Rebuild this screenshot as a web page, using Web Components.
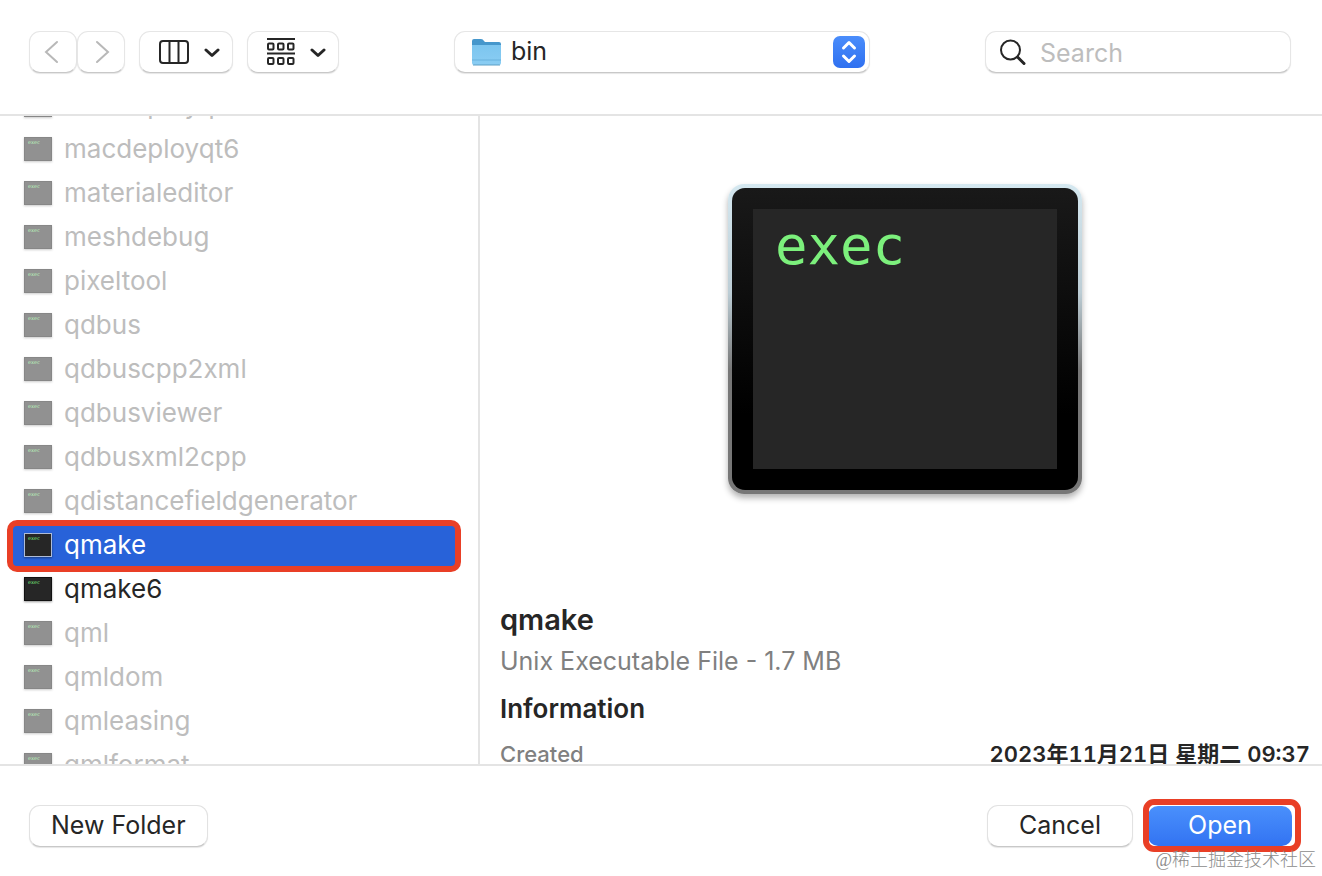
<!DOCTYPE html>
<html lang="en">
<head>
<meta charset="utf-8">
<meta name="viewport" content="width=device-width, initial-scale=1">
<title>Open</title>
<style>
    body {
        margin: 0;
        background: #fff;
        color: #262626;
        font-family: Inter, "Noto Sans CJK SC", sans-serif;
        font-size: 25px;
        line-height: 32px;
    }
</style>
</head>
<body>
<file-dialog>
    <dialog-toolbar slot="toolbar"></dialog-toolbar>
    <file-list slot="files"></file-list>
    <file-preview slot="preview">
        <span slot="name">qmake</span>
        <span slot="kind">Unix Executable File - 1.7 MB</span>
        <span slot="created">2023年11月21日 星期二 09:37</span>
    </file-preview>
    <push-button slot="left">New Folder</push-button>
    <push-button slot="right">Cancel</push-button>
    <push-button slot="right" primary marked>Open</push-button>
    <span slot="credit">@稀土掘金技术社区</span>
</file-dialog>

<script>
class FileDialog extends HTMLElement {

    constructor() {
        super();
        this.attachShadow({mode: "open"}).innerHTML = `
        <style>
            :host {
                display: grid;
                grid-template-rows: auto minmax(0, 1fr) auto;
                height: 100vh;
                position: relative;
            }

            header {
                border-bottom: 2px solid #e4e4e4;
                padding: 31px 31px 41px 29px;
            }

            main {
                display: grid;
                grid-template-columns: 480px minmax(0, 1fr);
                min-height: 0;
                overflow: hidden;
            }

            footer {
                display: flex;
                justify-content: space-between;
                border-top: 2px solid #e4e4e4;
                padding: 39px 29px 29px;
            }

            .actions {
                display: flex;
                gap: 14px;
            }

            .credit {
                position: absolute;
                right: 6px;
                bottom: 4px;
                font: 300 18px/24px "Liberation Serif", "Noto Sans CJK SC", serif;
                color: #8c8c8c;
                pointer-events: none;
            }
        </style>
        <header><slot name="toolbar"></slot></header>
        <main>
            <slot name="files"></slot>
            <slot name="preview"></slot>
        </main>
        <footer>
            <slot name="left"></slot>
            <div class="actions"><slot name="right"></slot></div>
        </footer>
        <div class="credit"><slot name="credit"></slot></div>`;
    }
}

class DialogToolbar extends HTMLElement {

    constructor() {
        super();
        this.attachShadow({mode: "open"}).innerHTML = `
        <style>
            * {
                box-sizing: border-box;
            }

            :host {
                display: flex;
                justify-content: space-between;
                align-items: center;
            }

            .tools, .pair {
                display: flex;
            }

            .tools {
                gap: 14px;
            }

            .box {
                display: flex;
                align-items: center;
                height: 42px;
                margin: 0;
                padding: 0;
                border: 1px solid #e6e6e6;
                border-bottom-color: #c8c8c8;
                border-radius: 11px;
                background: #fff;
                box-shadow: 0 1px 1px rgba(0, 0, 0, 0.1);
                font: inherit;
                color: inherit;
            }

            button.box {
                justify-content: center;
                width: 48px;
            }

            button.menu {
                width: 94px;
                gap: 14px;
                padding-left: 5px;
            }

            button.group {
                width: 92px;
            }

            svg {
                display: block;
                flex: none;
            }

            .path {
                width: 416px;
                padding: 0 4px 0 16px;
                gap: 8px;
            }

            select {
                flex: 1;
                min-width: 0;
                height: 40px;
                appearance: none;
                border: 0;
                padding: 0 0 2px;
                background: none;
                font: inherit;
                color: inherit;
            }

            .search {
                width: 306px;
                padding: 0 14px;
                gap: 14px;
            }

            input {
                flex: 1;
                min-width: 0;
                border: 0;
                padding: 2px 0 0;
                outline: 0;
                background: none;
                font: inherit;
                color: inherit;
            }

            input::placeholder {
                color: #bdbdbd;
            }
        </style>
        <div class="tools">
            <div class="pair">
                <button class="box" aria-label="Back">
                    <svg width="18" height="24" fill="none" stroke="#b8b8b8" stroke-width="2" stroke-linecap="round"><path d="M13 2L2 12L13 22"/></svg>
                </button>
                <button class="box" aria-label="Forward">
                    <svg width="18" height="24" fill="none" stroke="#b8b8b8" stroke-width="2" stroke-linecap="round"><path d="M5 2L16 12L5 22"/></svg>
                </button>
            </div>
            <button class="box menu" aria-label="Column view">
                <svg width="32" height="26" fill="none" stroke="#262626" stroke-width="2">
                    <rect x="2" y="2" width="28" height="22" rx="3"/>
                    <path d="M11.500 2V24M20.500 2V24"/>
                </svg>
                <svg width="16" height="12" fill="none" stroke="#262626" stroke-width="3" stroke-linecap="round" stroke-linejoin="round"><path d="M2 4L8 9.500L14 4"/></svg>
            </button>
            <button class="box menu group" aria-label="Group items">
                <svg width="30" height="30" fill="none" stroke="#262626" stroke-width="2">
                    <path d="M1 2H29M1 16.500H29"/>
                    <rect x="2" y="6.500" width="5.500" height="6" rx="1"/>
                    <rect x="12" y="6.500" width="5.500" height="6" rx="1"/>
                    <rect x="22" y="6.500" width="5.500" height="6" rx="1"/>
                    <rect x="2" y="21" width="5.500" height="6" rx="1"/>
                    <rect x="12" y="21" width="5.500" height="6" rx="1"/>
                    <rect x="22" y="21" width="5.500" height="6" rx="1"/>
                </svg>
                <svg width="16" height="12" fill="none" stroke="#262626" stroke-width="3" stroke-linecap="round" stroke-linejoin="round"><path d="M2 4L8 9.500L14 4"/></svg>
            </button>
        </div>
        <div class="box path">
            <svg width="32" height="30">
                <defs><linearGradient id="f" x2="0" y2="1"><stop stop-color="#7cc5ef"/><stop offset="1" stop-color="#8acdf3"/></linearGradient></defs>
                <path d="M1 26V4Q1 2 3 2H10Q12 2 13 4L14 5H28Q30 5 30 7V26Z" fill="#4697cc"/>
                <path d="M1 8H30V26Q30 28 28 28H3Q1 28 1 26Z" fill="url(#f)"/>
                <path d="M1 23H30" stroke="#68b1dd"/>
                <path d="M2 28H29" stroke="#5d9fc5"/>
            </svg>
            <select aria-label="Folder"><option>bin</option></select>
            <svg width="32" height="32">
                <defs><linearGradient id="b" x2="0" y2="1"><stop stop-color="#4a8dfb"/><stop offset="1" stop-color="#2f70f0"/></linearGradient></defs>
                <rect width="32" height="32" rx="7" fill="url(#b)"/>
                <path d="M10.500 12L16 6.500L21.500 12M10.500 20L16 25.500L21.500 20" fill="none" stroke="#fff" stroke-width="3" stroke-linecap="round" stroke-linejoin="round"/>
            </svg>
        </div>
        <label class="box search">
            <svg width="26" height="28" fill="none" stroke="#262626" stroke-linecap="round">
                <circle cx="10.500" cy="12" r="9.500" stroke-width="2"/>
                <path d="M17.500 19L24 25.500" stroke-width="3"/>
            </svg>
            <input type="text" placeholder="Search" aria-label="Search">
        </label>`;
    }
}

// the same terminal picture serves the rows and the preview
class ExecIcon extends HTMLElement {

    connectedCallback() {
        const root = this.attachShadow({mode: "open"});
        if (this.hasAttribute("large")) {
            root.innerHTML = `
            <style>
                :host {
                    display: block;
                    box-sizing: border-box;
                    width: 354px;
                    height: 310px;
                    padding: 4px;
                    border-radius: 16px;
                    background: linear-gradient(#d5e8f0, #bccdd5 35%, #777 60%, #777);
                    box-shadow: 0 4px 6px rgba(0, 0, 0, 0.3);
                }

                .frame {
                    box-sizing: border-box;
                    height: 302px;
                    padding: 21px;
                    border-radius: 13px;
                    background: linear-gradient(#191919, #000 75%);
                }

                .screen {
                    box-sizing: border-box;
                    height: 260px;
                    padding: 5px 22px;
                    background: #262626;
                    color: #7cf07c;
                    font: 54px/64px "DejaVu Sans Mono", monospace;
                }
            </style>
            <div class="frame"><div class="screen">exec</div></div>`;
            return;
        }
        root.innerHTML = `
        <style>
            :host {
                display: block;
                box-sizing: border-box;
                flex: none;
                width: 28px;
                height: 24px;
                padding: 1px 3px;
                border: 1px solid #111;
                background: #262626;
                box-shadow: 0 1px 2px rgba(0, 0, 0, 0.4);
                color: #7cf07c;
                font: 5px/6px "DejaVu Sans Mono", monospace;
            }

            :host([dim]) {
                opacity: 0.5;
            }

            :host([lit]) {
                border-color: #aebcd8;
            }
        </style>exec`;
    }
}

class FileRow extends HTMLElement {

    constructor() {
        super();
        this.attachShadow({mode: "open"});
    }

    set file(file) {
        this._file = file;
        this.render();
    }

    render() {
        const {name, enabled, selected} = this._file;
        this.shadowRoot.innerHTML = `
        <style>
            :host {
                display: block;
                position: relative;
            }

            button {
                display: flex;
                align-items: center;
                gap: 12px;
                width: 100%;
                height: 44px;
                padding: 0 14px;
                border: 0;
                background: none;
                font: inherit;
                color: #262626;
                text-align: left;
            }

            button:disabled {
                color: #bdbdbd;
            }

            .mark {
                position: absolute;
                inset: -3px -3px -5px;
                border: 6px solid #e93f26;
                border-radius: 10px;
                background: #2862d9;
            }

            .mark + button {
                position: relative;
                color: #fff;
            }
        </style>
        ${selected ? `<div class="mark"></div>` : ""}
        <button ${enabled ? "" : "disabled"}>
            <exec-icon ${enabled ? "" : "dim"} ${selected ? "lit" : ""}></exec-icon>
            <span>${name}</span>
        </button>`;
    }
}

const files = [
    "macdeployqt", "macdeployqt6", "materialeditor", "meshdebug", "pixeltool",
    "qdbus", "qdbuscpp2xml", "qdbusviewer", "qdbusxml2cpp", "qdistancefieldgenerator",
    "qmake", "qmake6", "qml", "qmldom", "qmleasing", "qmlformat"
];

class FileList extends HTMLElement {

    constructor() {
        super();
        this.attachShadow({mode: "open"}).innerHTML = `
        <style>
            :host {
                display: block;
                box-sizing: border-box;
                min-height: 0;
                overflow-y: auto;
                scrollbar-width: none;
                padding: 0 20px 0 10px;
                border-right: 2px solid #e4e4e4;
                font-size: 26px;
            }
        </style>`;
    }

    connectedCallback() {
        files.forEach(name => {
            const row = document.createElement("file-row");
            row.file = {
                name,
                enabled: name.startsWith("qmake"),
                selected: name === "qmake"
            };
            this.shadowRoot.appendChild(row);
        });
    }
}

class FilePreview extends HTMLElement {

    constructor() {
        super();
        this.attachShadow({mode: "open"}).innerHTML = `
        <style>
            :host {
                display: block;
                min-height: 0;
                overflow: hidden;
                padding: 68px 12px 0 20px;
            }

            exec-icon {
                margin: 0 auto 106px;
            }

            h1, h2, p, dl, dd {
                margin: 0;
            }

            h1 {
                font-size: 29px;
                line-height: 40px;
                font-weight: 600;
            }

            p {
                line-height: 42px;
                color: #808080;
            }

            h2 {
                font-size: 26px;
                line-height: 54px;
                font-weight: 600;
            }

            dl {
                display: flex;
                justify-content: space-between;
                font-size: 22px;
                line-height: 36px;
                font-weight: 500;
            }

            dt {
                color: #808080;
            }

            dd {
                font-variant-numeric: tabular-nums;
                font-weight: 600;
            }
        </style>
        <exec-icon large></exec-icon>
        <h1><slot name="name"></slot></h1>
        <p><slot name="kind"></slot></p>
        <h2>Information</h2>
        <dl>
            <dt>Created</dt>
            <dd><slot name="created"></slot></dd>
        </dl>`;
    }
}

class PushButton extends HTMLElement {

    constructor() {
        super();
        this.attachShadow({mode: "open"}).innerHTML = `
        <style>
            :host {
                display: block;
                position: relative;
            }

            button {
                box-sizing: border-box;
                min-width: 146px;
                height: 42px;
                padding: 0 21px 2px;
                border: 1px solid #e2e2e2;
                border-bottom-color: #c8c8c8;
                border-radius: 11px;
                background: #fff;
                box-shadow: 0 1px 1px rgba(0, 0, 0, 0.1);
                font: inherit;
                color: inherit;
            }

            :host([primary]) button {
                border-color: transparent;
                background: linear-gradient(#4a90fc, #3273f2) padding-box;
                box-shadow: none;
                color: #fff;
            }

            :host([marked])::after {
                content: "";
                position: absolute;
                inset: -6px -8px -5px -4px;
                border: 6px solid #e93f26;
                border-radius: 11px;
                pointer-events: none;
            }
        </style>
        <button><slot></slot></button>`;
    }
}

customElements.define("exec-icon", ExecIcon);
customElements.define("file-row", FileRow);
customElements.define("file-list", FileList);
customElements.define("file-preview", FilePreview);
customElements.define("push-button", PushButton);
customElements.define("dialog-toolbar", DialogToolbar);
customElements.define("file-dialog", FileDialog);

// start a little way down, so that the first row is cut by the header
document.querySelector("file-list").scrollTop = 33;
</script>
</body>
</html>
